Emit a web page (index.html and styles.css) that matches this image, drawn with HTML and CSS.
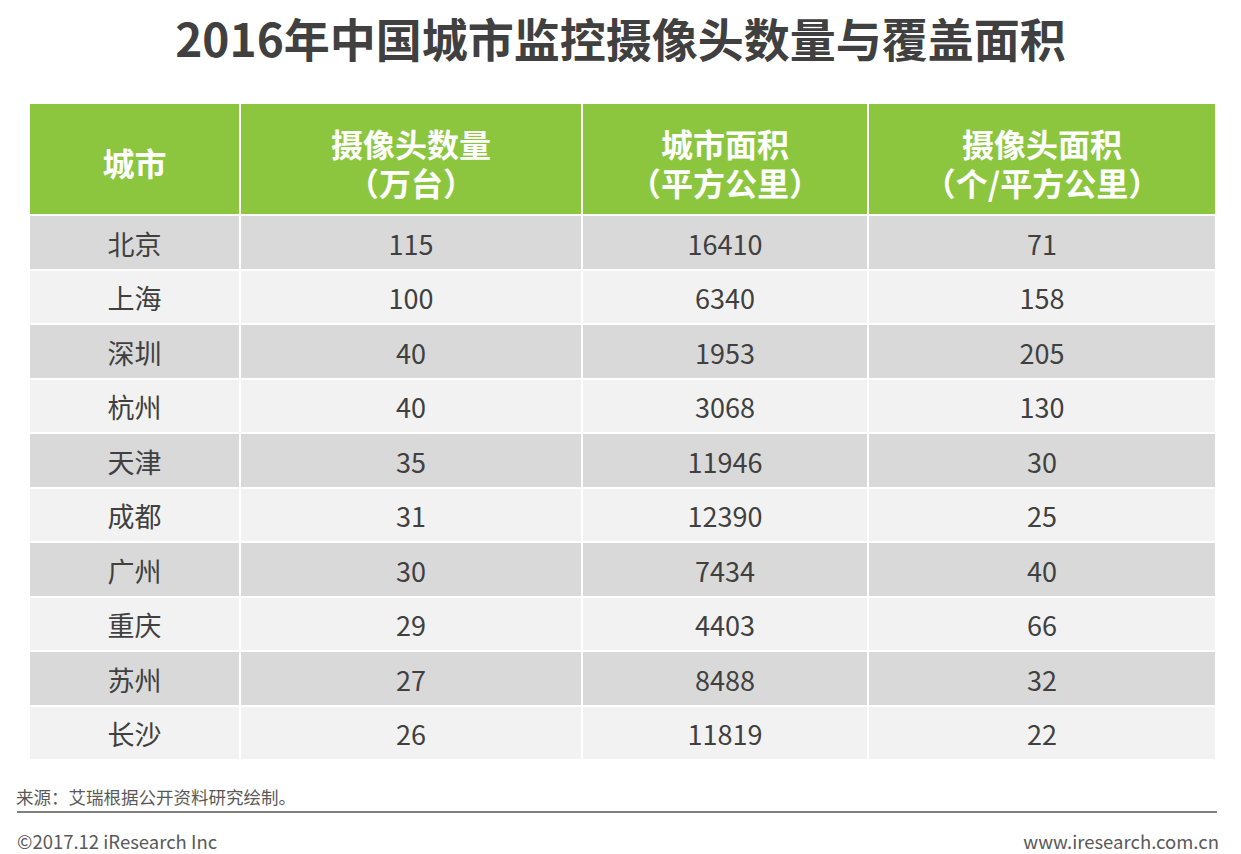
FILE: index.html
```html
<!DOCTYPE html>
<html lang="zh-CN">
<head>
<meta charset="utf-8">
<title>2016年中国城市监控摄像头数量与覆盖面积</title>
<link rel="stylesheet" href="styles.css">
</head>
<body>
<div class="page">
  <h1 class="title">2016年中国城市监控摄像头数量与覆盖面积</h1>
  <div class="grid">
    <div class="th"><span class="hl">城市</span></div>
    <div class="th"><span class="hl">摄像头数量</span><span class="hl">（万台）</span></div>
    <div class="th"><span class="hl">城市面积</span><span class="hl">（平方公里）</span></div>
    <div class="th"><span class="hl">摄像头面积</span><span class="hl">（个/平方公里）</span></div>

    <div class="td odd">北京</div><div class="td odd">115</div><div class="td odd">16410</div><div class="td odd">71</div>
    <div class="td even">上海</div><div class="td even">100</div><div class="td even">6340</div><div class="td even">158</div>
    <div class="td odd">深圳</div><div class="td odd">40</div><div class="td odd">1953</div><div class="td odd">205</div>
    <div class="td even">杭州</div><div class="td even">40</div><div class="td even">3068</div><div class="td even">130</div>
    <div class="td odd">天津</div><div class="td odd">35</div><div class="td odd">11946</div><div class="td odd">30</div>
    <div class="td even">成都</div><div class="td even">31</div><div class="td even">12390</div><div class="td even">25</div>
    <div class="td odd">广州</div><div class="td odd">30</div><div class="td odd">7434</div><div class="td odd">40</div>
    <div class="td even">重庆</div><div class="td even">29</div><div class="td even">4403</div><div class="td even">66</div>
    <div class="td odd">苏州</div><div class="td odd">27</div><div class="td odd">8488</div><div class="td odd">32</div>
    <div class="td even">长沙</div><div class="td even">26</div><div class="td even">11819</div><div class="td even">22</div>
  </div>
  <div class="source">来源：艾瑞根据公开资料研究绘制。</div>
  <div class="rule"></div>
  <div class="footer">
    <span>©2017.12 iResearch Inc</span>
    <span>www.iresearch.com.cn</span>
  </div>
</div>
</body>
</html>
```

FILE: styles.css
```css
html, body {
  margin: 0;
  padding: 0;
  background: #ffffff;
}

body {
  font-family: "Noto Sans CJK SC", "Noto Sans", sans-serif;
  color: #404040;
}

.page {
  width: 1241px;
  height: 854px;
  overflow: hidden;
}

.title {
  margin: 0;
  padding-top: 10px;
  height: 94px;
  line-height: 54px;
  font-size: 46px;
  font-weight: 700;
  text-align: center;
  color: #404040;
}

.grid {
  margin-left: 30px;
  width: 1185px;
  display: grid;
  grid-template-columns: 209px 340px 284px 346px;
  grid-template-rows: 110px;
  grid-auto-rows: 52.5px;
  gap: 2px;
}

.th {
  background: #8cc63f;
  color: #ffffff;
  font-weight: 700;
  font-size: 32px;
  display: flex;
  flex-direction: column;
  align-items: center;
  justify-content: center;
  gap: 7px;
  text-align: center;
  padding-top: 6px;
  box-sizing: border-box;
}

.hl {
  display: block;
  line-height: 32px;
}

.td {
  display: flex;
  align-items: center;
  justify-content: center;
  font-size: 27px;
  color: #404040;
  padding-top: 2px;
  box-sizing: border-box;
}

.odd {
  background: #d9d9d9;
}

.even {
  background: #f2f2f2;
}

.source {
  margin-top: 27px;
  padding-left: 16px;
  font-size: 17.5px;
  line-height: 22px;
  color: #595959;
}

.rule {
  margin: 3px 24px 0 17px;
  height: 2px;
  background: #808080;
}

.footer {
  margin-top: 16px;
  padding: 0 22px 0 17px;
  display: flex;
  justify-content: space-between;
  font-size: 18.5px;
  line-height: 24px;
  color: #595959;
}
```
